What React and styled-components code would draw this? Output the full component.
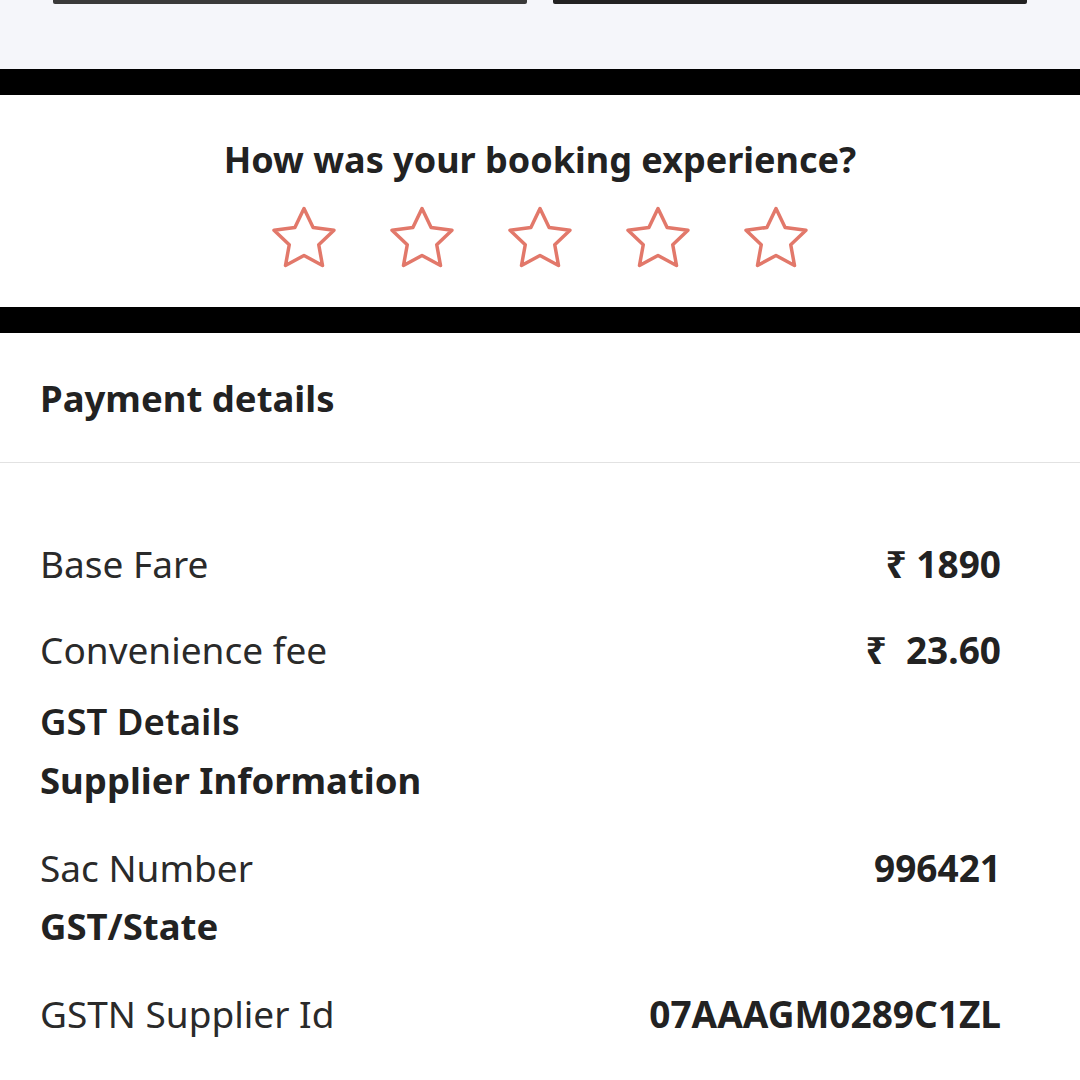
import React from "react";
import styled, { createGlobalStyle } from "styled-components";

const Global = createGlobalStyle`
  html, body { margin: 0; padding: 0; background: #ffffff; }
  body { font-family: "Noto Sans", "Open Sans", sans-serif; color: #222222; }
`;

const Page = styled.div`
  width: 1080px;
  display: flex;
  flex-direction: column;
`;

const TopArea = styled.div`
  height: 69px;
  background: #f5f6fa;
  display: flex;
  align-items: flex-start;
  gap: 26px;
  padding: 0 53px;
  box-sizing: border-box;
`;

const ButtonEdge = styled.div`
  flex: 1;
  height: 4px;
  background: ${(p) => p.$color};
  border-radius: 0 0 2px 2px;
`;

const BlackBand = styled.div`
  height: 26px;
  background: #000000;
`;

const RatingSection = styled.section`
  height: 212px;
  display: flex;
  flex-direction: column;
  align-items: center;
  box-sizing: border-box;
  padding-top: 40px;
`;

const RatingTitle = styled.h2`
  margin: 0;
  font-size: 36px;
  line-height: 50px;
  font-weight: 700;
  color: #222222;
`;

const Stars = styled.div`
  display: flex;
  gap: 52px;
  margin-top: 20px;
`;

const StarButton = styled.button`
  width: 66px;
  height: 66px;
  padding: 0;
  border: none;
  background: none;
  display: flex;
  align-items: center;
  justify-content: center;
`;

const SectionHeader = styled.div`
  height: 129px;
  display: flex;
  align-items: center;
  padding-left: 40px;
  border-bottom: 1px solid #e2e2e2;
  font-size: 36.5px;
  font-weight: 700;
  color: #222222;
`;

const List = styled.div`
  display: flex;
  flex-direction: column;
  padding: 36px 79px 40px 40px;
`;

const Row = styled.div`
  display: flex;
  justify-content: space-between;
  align-items: center;
  margin-top: ${(p) => p.$gap}px;
  height: 44px;
  font-size: 37px;
`;

const Label = styled.span`
  font-weight: 400;
  color: #2a2a2a;
`;

const Value = styled.span`
  font-weight: 700;
  color: #222222;
  white-space: pre;
`;

const Heading = styled.div`
  margin-top: ${(p) => p.$gap}px;
  height: 44px;
  line-height: 44px;
  font-size: 36.5px;
  font-weight: ${(p) => p.$weight};
  color: #222222;
`;

function Star() {
  const cx = 33, cy = 35, R = 31.5, r = 15.5;
  const pts = [];
  for (let i = 0; i < 10; i++) {
    const rad = i % 2 === 0 ? R : r;
    const a = (Math.PI / 5) * i - Math.PI / 2;
    pts.push(`${(cx + rad * Math.cos(a)).toFixed(2)},${(cy + rad * Math.sin(a)).toFixed(2)}`);
  }
  return (
    <svg width="66" height="66" viewBox="0 0 66 66">
      <polygon
        points={pts.join(" ")}
        fill="none"
        stroke="#e2786a"
        strokeWidth="3.5"
        strokeLinejoin="round"
      />
    </svg>
  );
}

export default function App() {
  return (
    <Page>
      <Global />
      <TopArea>
        <ButtonEdge $color="#3a3a3a" />
        <ButtonEdge $color="#222222" />
      </TopArea>
      <BlackBand />
      <RatingSection>
        <RatingTitle>How was your booking experience?</RatingTitle>
        <Stars>
          {[1, 2, 3, 4, 5].map((n) => (
            <StarButton key={n} aria-label={`${n} star`}>
              <Star />
            </StarButton>
          ))}
        </Stars>
      </RatingSection>
      <BlackBand />
      <SectionHeader>Payment details</SectionHeader>
      <List>
        <Row $gap={42}>
          <Label>Base Fare</Label>
          <Value>₹ 1890</Value>
        </Row>
        <Row $gap={42}>
          <Label>Convenience fee</Label>
          <Value>₹  23.60</Value>
        </Row>
        <Heading $gap={28} $weight={600}>GST Details</Heading>
        <Heading $gap={15} $weight={700}>Supplier Information</Heading>
        <Row $gap={43}>
          <Label>Sac Number</Label>
          <Value>996421</Value>
        </Row>
        <Heading $gap={15} $weight={700}>GST/State</Heading>
        <Row $gap={43}>
          <Label>GSTN Supplier Id</Label>
          <Value>07AAAGM0289C1ZL</Value>
        </Row>
      </List>
    </Page>
  );
}
